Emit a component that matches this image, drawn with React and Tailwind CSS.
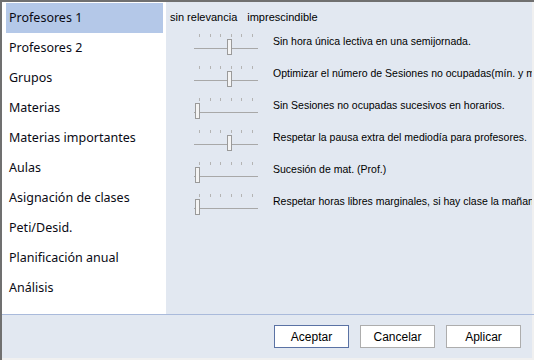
import React from "react";

const items = [
  "Profesores 1",
  "Profesores 2",
  "Grupos",
  "Materias",
  "Materias importantes",
  "Aulas",
  "Asignación de clases",
  "Peti/Desid.",
  "Planificación anual",
  "Análisis",
];

const rules = [
  { pos: 4, label: "Sin hora única lectiva en una semijornada." },
  { pos: 4, label: "Optimizar el número de Sesiones no ocupadas(mín. y máx.)" },
  { pos: 0, label: "Sin Sesiones no ocupadas sucesivos en horarios." },
  { pos: 4, label: "Respetar la pausa extra del mediodía para profesores." },
  { pos: 0, label: "Sucesión de mat. (Prof.)" },
  { pos: 0, label: "Respetar horas libres marginales, si hay clase la mañana y la tarde" },
];

// thumb left offsets inside the 64px slider box
const thumbLeft = [1, 6, 12, 17, 33, 38, 45];

function Slider({ pos }) {
  return (
    <div className="relative w-[64px] h-[22px] shrink-0">
      <div className="absolute top-0 left-[5px] right-[5px] flex justify-between">
        {[0, 1, 2, 3, 4, 5].map((i) => (
          <div key={i} className="w-px h-[3px] bg-[#b4b4b4]" />
        ))}
      </div>
      <div className="absolute top-[14px] left-0 right-0 h-px bg-[#a8a8a8]" />
      <div
        className="absolute top-[5px] w-[5px] h-[16px] border border-[#9a9a9a] bg-[#f4f4f4]"
        style={{ left: thumbLeft[pos] }}
      />
    </div>
  );
}

export default function App() {
  return (
    <div className="w-[534px] h-[360px] bg-[#e2e8f1] border-t-2 border-l-2 border-[#707070] flex flex-col overflow-hidden">
      <div className="flex h-[312px] border-r-2 border-[#f0f0f0]">
        <div className="w-[164px] bg-white pl-1 pr-[3px] pt-px shrink-0" style={{ fontFamily: "'Noto Sans', sans-serif" }}>
          {items.map((it, i) => (
            <div
              key={it}
              className={`h-[30px] flex items-center pl-[3px] text-[12.5px] text-[#0a0a14] ${i === 0 ? "bg-[#b4c8e8]" : ""}`}
            >
              {it}
            </div>
          ))}
        </div>
        <div className="flex-1 min-w-0 overflow-hidden pl-1 pt-[9px] text-[11px] text-black" style={{ fontFamily: "'Liberation Sans', sans-serif" }}>
          <div className="flex gap-[10px] leading-[13px] whitespace-nowrap">
            <span>sin relevancia</span>
            <span>imprescindible</span>
          </div>
          <div className="flex flex-col gap-[10px] mt-[10px] pl-6">
            {rules.map((r, i) => (
              <div key={i} className="flex items-start gap-[15px] h-[22px]">
                <Slider pos={r.pos} />
                <span className="whitespace-nowrap leading-[13px] pt-px text-[10.5px]">{r.label}</span>
              </div>
            ))}
          </div>
        </div>
      </div>
      <div className="h-px bg-[#a9badb]" />
      <div className="flex-1 flex justify-end items-start gap-[11px] pt-[10px] pr-[11px] border-r-2 border-b-2 border-[#f0f0f0] text-[12px]" style={{ fontFamily: "'Liberation Sans', sans-serif" }}>
        <button className="w-[75px] h-[23px] bg-white border border-[#5a72a4] text-black">Aceptar</button>
        <button className="w-[75px] h-[23px] bg-white border border-[#adadad] text-black">Cancelar</button>
        <button className="w-[75px] h-[23px] bg-white border border-[#adadad] text-black">Aplicar</button>
      </div>
    </div>
  );
}
